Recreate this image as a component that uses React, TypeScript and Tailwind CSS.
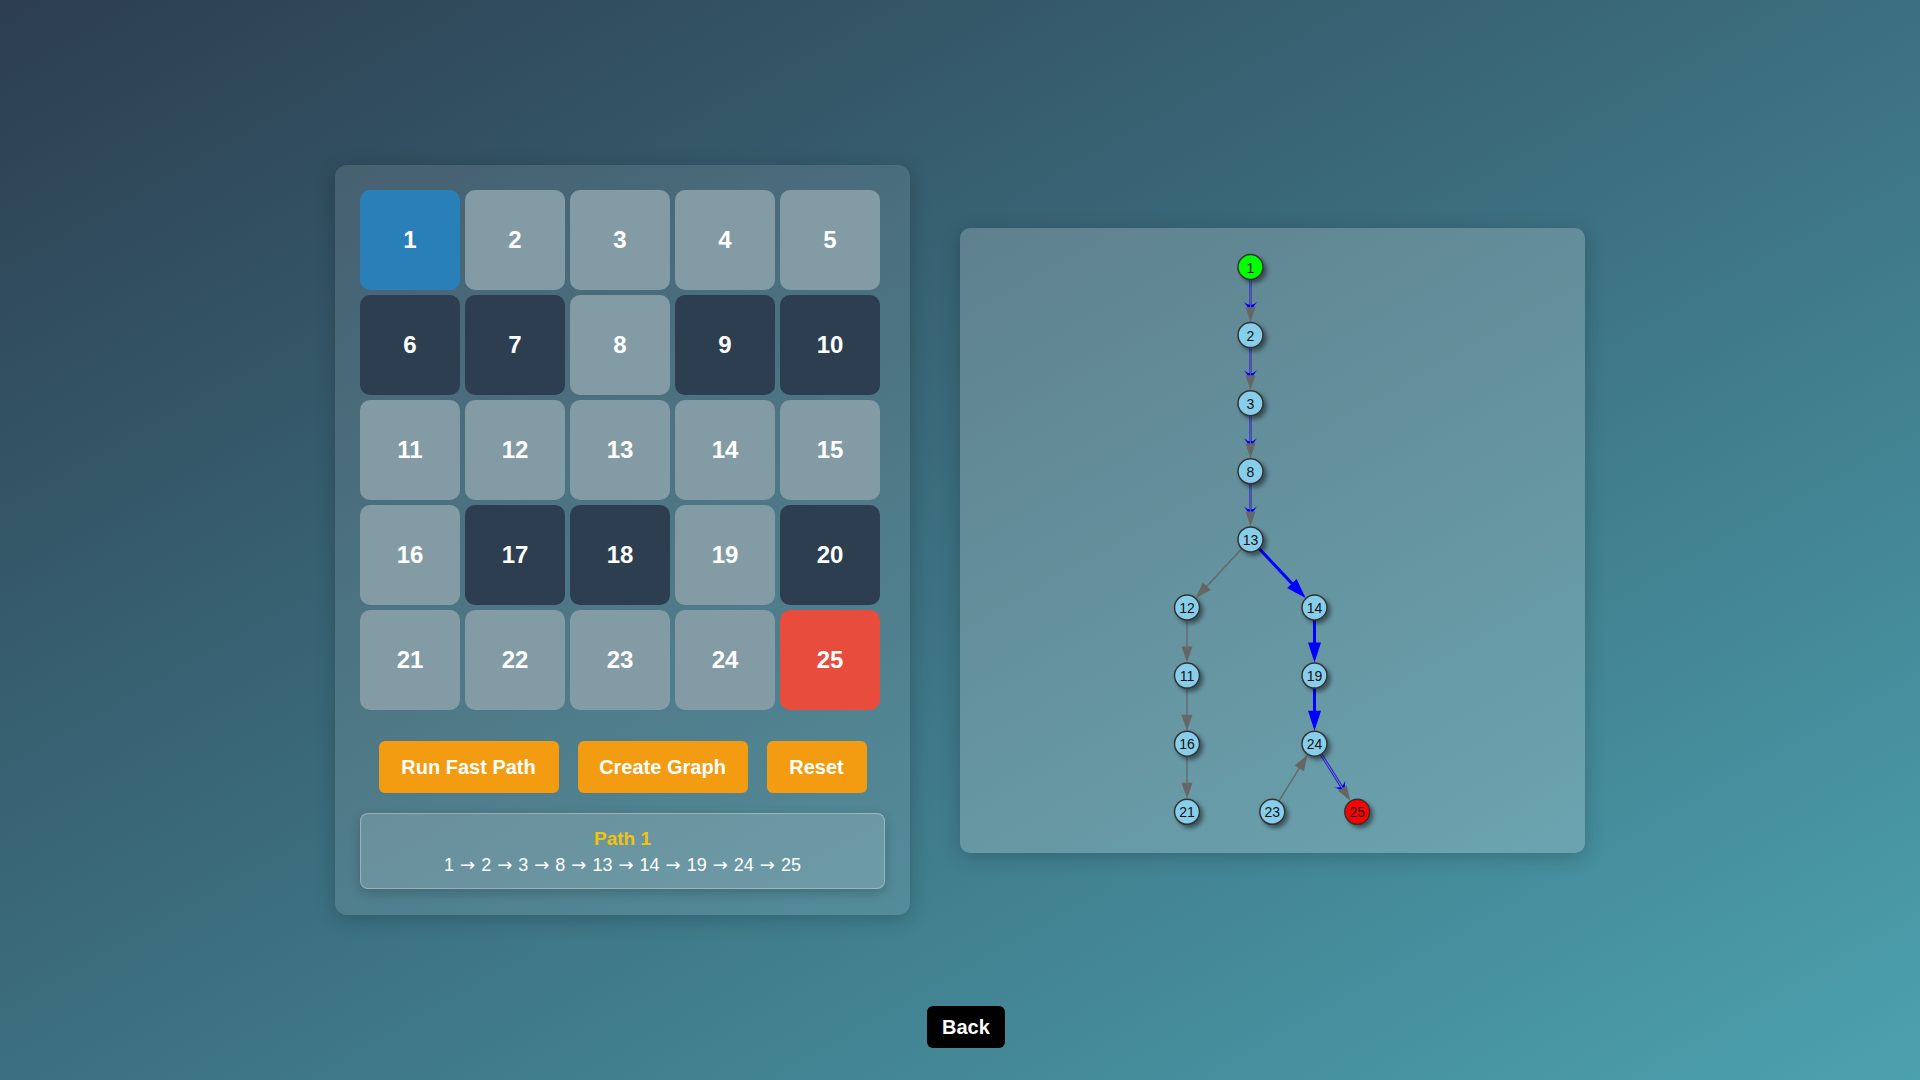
import React from "react";

type P = { id: number; x: number; y: number };

const X = { A: 290.5, L: 227, R: 354.5, M: 312.3, E: 397.3 };
const Y = (r: number) => 39 + r * 68.1;

const nodes: P[] = [
  { id: 1, x: X.A, y: Y(0) },
  { id: 2, x: X.A, y: Y(1) },
  { id: 3, x: X.A, y: Y(2) },
  { id: 8, x: X.A, y: Y(3) },
  { id: 13, x: X.A, y: Y(4) },
  { id: 12, x: X.L, y: Y(5) },
  { id: 14, x: X.R, y: Y(5) },
  { id: 11, x: X.L, y: Y(6) },
  { id: 19, x: X.R, y: Y(6) },
  { id: 16, x: X.L, y: Y(7) },
  { id: 24, x: X.R, y: Y(7) },
  { id: 21, x: X.L, y: Y(8) },
  { id: 23, x: X.M, y: Y(8) },
  { id: 25, x: X.E, y: Y(8) },
];

const byId = (id: number) => nodes.find((n) => n.id === id)!;
const R = 12.5;

function geom(a: number, b: number) {
  const p = byId(a);
  const q = byId(b);
  const dx = q.x - p.x;
  const dy = q.y - p.y;
  const len = Math.hypot(dx, dy);
  const ux = dx / len;
  const uy = dy / len;
  const nx = -uy;
  const ny = ux;
  const sx = p.x + ux * R;
  const sy = p.y + uy * R;
  const tx = q.x - ux * (R + 0.5);
  const ty = q.y - uy * (R + 0.5);
  const at = (d: number) => [tx - ux * d, ty - uy * d];
  const tri = (back: number, apexBack: number, w: number) => {
    const [bx, by] = at(back);
    const [ax, ay] = at(apexBack);
    return `${ax},${ay} ${bx + nx * w},${by + ny * w} ${bx - nx * w},${by - ny * w}`;
  };
  const crescent = (back: number, depth: number, w: number) => {
    const [bx, by] = at(back);
    const [cx, cy] = at(back - depth);
    const [mx, my] = at(back - depth - 3);
    return `M ${bx + nx * w} ${by + ny * w} Q ${cx} ${cy} ${bx - nx * w} ${by - ny * w} L ${mx} ${my} Z`;
  };
  return { sx, sy, at, tri, crescent };
}

function GrayEdge({ a, b }: { a: number; b: number }) {
  const g = geom(a, b);
  const [ex, ey] = g.at(12);
  return (
    <g>
      <line x1={g.sx} y1={g.sy} x2={ex} y2={ey} stroke="#666" strokeWidth={1.3} />
      <polygon points={g.tri(16, 0, 5.5)} fill="#666" />
    </g>
  );
}

function BoldEdge({ a, b }: { a: number; b: number }) {
  const g = geom(a, b);
  const [ex, ey] = g.at(16);
  return (
    <g>
      <line x1={g.sx} y1={g.sy} x2={ex} y2={ey} stroke="#0000ff" strokeWidth={3} />
      <polygon points={g.tri(20, 0, 6.5)} fill="#0000ff" />
    </g>
  );
}

function PathEdge({ a, b, wide }: { a: number; b: number; wide?: boolean }) {
  const g = geom(a, b);
  const [ex, ey] = g.at(17);
  const [gx, gy] = g.at(14);
  return (
    <g>
      <line x1={g.sx} y1={g.sy} x2={ex} y2={ey} stroke="#2a2ad8" strokeWidth={wide ? 3 : 2.2} />
      <path d={g.crescent(20, 6, 6.5)} fill="#0000ff" />
      <line x1={g.sx} y1={g.sy} x2={gx} y2={gy} stroke={wide ? "#7a8a99" : "#5a5a8a"} strokeWidth={1} />
      <polygon points={g.tri(15, 0, 5)} fill="#666" />
    </g>
  );
}

function Graph() {
  return (
    <svg width={625} height={625} viewBox="0 0 625 625" className="block">
      <defs>
        <filter id="sh" x="-50%" y="-50%" width="200%" height="200%">
          <feDropShadow dx={3} dy={3} stdDeviation={2} floodColor="#000" floodOpacity={0.45} />
        </filter>
      </defs>
      <GrayEdge a={13} b={12} />
      <GrayEdge a={12} b={11} />
      <GrayEdge a={11} b={16} />
      <GrayEdge a={16} b={21} />
      <GrayEdge a={23} b={24} />
      <PathEdge a={1} b={2} />
      <PathEdge a={2} b={3} />
      <PathEdge a={3} b={8} />
      <PathEdge a={8} b={13} />
      <BoldEdge a={13} b={14} />
      <BoldEdge a={14} b={19} />
      <BoldEdge a={19} b={24} />
      <PathEdge a={24} b={25} wide />
      {nodes.map((n) => (
        <g key={n.id}>
          <circle
            cx={n.x}
            cy={n.y}
            r={R}
            fill={n.id === 1 ? "#00ff00" : n.id === 25 ? "#ff0000" : "#87ceeb"}
            stroke="#333"
            strokeWidth={1.5}
            filter="url(#sh)"
          />
          <text
            x={n.x}
            y={n.y + 0.5}
            textAnchor="middle"
            dominantBaseline="central"
            fontSize={14}
            fontFamily="'Liberation Sans', Arial, sans-serif"
            fill="#111"
          >
            {n.id}
          </text>
        </g>
      ))}
    </svg>
  );
}

const dark = new Set([6, 7, 9, 10, 17, 18, 20]);

function cellClass(n: number) {
  if (n === 1) return "bg-[#2980b9]";
  if (n === 25) return "bg-[#e74c3c]";
  if (dark.has(n)) return "bg-[#2c3e50]";
  return "bg-[#829ba5]";
}

const pathNums = [1, 2, 3, 8, 13, 14, 19, 24, 25];

export default function App() {
  const cells = Array.from({ length: 25 }, (_, i) => i + 1);
  return (
    <div
      className="relative h-screen w-full overflow-hidden bg-[linear-gradient(to_bottom_right,#2c3e50,#4ca1af)] text-white"
      style={{ fontFamily: "'Liberation Sans', Arial, sans-serif" }}
    >
      <div className="flex h-full items-center justify-center gap-[50px]">
        <div className="flex h-[750px] w-[575px] flex-col rounded-[12px] bg-white/10 p-[25px] shadow-[0_4px_20px_rgba(0,0,0,0.2)]">
          <div className="grid grid-cols-[repeat(5,100px)] grid-rows-[repeat(5,100px)] gap-[5px]">
            {cells.map((n) => (
              <div
                key={n}
                className={`flex items-center justify-center rounded-[10px] text-[24px] font-bold ${cellClass(n)}`}
              >
                {n}
              </div>
            ))}
          </div>
          <div className="mt-[31px] flex justify-center gap-[19px]">
            <button className="h-[52px] w-[180px] rounded-[6px] bg-[#f39c12] text-[20px] font-bold text-white">
              Run Fast Path
            </button>
            <button className="h-[52px] w-[170px] rounded-[6px] bg-[#f39c12] text-[20px] font-bold text-white">
              Create Graph
            </button>
            <button className="h-[52px] w-[100px] rounded-[6px] bg-[#f39c12] text-[20px] font-bold text-white">
              Reset
            </button>
          </div>
          <div className="mt-[20px] flex h-[76px] flex-col items-center justify-center gap-[4px] rounded-[8px] border border-white/30 bg-white/15 pt-[2px] shadow-[0_4px_12px_rgba(0,0,0,0.2)]">
            <div className="text-[19px] font-bold leading-[22px] text-[#f1c40f]">Path 1</div>
            <div className="flex items-center text-[18px] leading-[22px] text-white">
              {pathNums.map((n, i) => (
                <React.Fragment key={n}>
                  {i > 0 && (
                    <span className="mx-[6px] text-[18px]" style={{ fontFamily: "'DejaVu Sans', sans-serif" }}>
                      →
                    </span>
                  )}
                  <span>{n}</span>
                </React.Fragment>
              ))}
            </div>
          </div>
        </div>
        <div className="h-[625px] w-[625px] rounded-[10px] bg-white/20 shadow-[0_4px_20px_rgba(0,0,0,0.2)]">
          <Graph />
        </div>
      </div>
      <button className="fixed bottom-[32px] left-[927px] h-[42px] rounded-[6px] bg-black px-[15px] text-[20px] font-bold text-white">
        Back
      </button>
    </div>
  );
}
